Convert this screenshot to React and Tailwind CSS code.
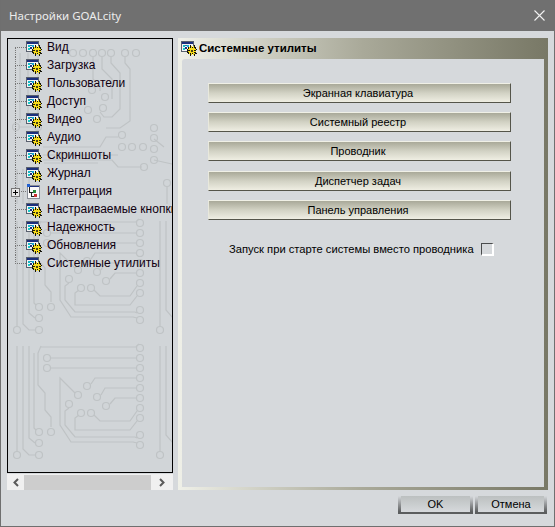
import React from 'react';

const treeItems = [
  'Вид', 'Загрузка', 'Пользователи', 'Доступ', 'Видео', 'Аудио', 'Скриншоты',
  'Журнал', 'Интеграция', 'Настраиваемые кнопки', 'Надежность', 'Обновления', 'Системные утилиты',
];

const toolButtons = [
  { label: 'Экранная клавиатура', gap: 'mt-0' },
  { label: 'Системный реестр', gap: 'mt-[9px]' },
  { label: 'Проводник', gap: 'mt-[9px]' },
  { label: 'Диспетчер задач', gap: 'mt-[10px]' },
  { label: 'Панель управления', gap: 'mt-[9px]' },
];

// small window with a yellow gear, the settings icon of the tree
const GearIcon = () => (
  <svg width="16" height="15" viewBox="0 0 16 15" shapeRendering="crispEdges" className="shrink-0">
    <rect x="0.5" y="0.5" width="12" height="10" fill="#f4f4f4" stroke="#59606e" />
    <rect x="1" y="1" width="11" height="2" fill="#1c2f7c" />
    <rect x="2" y="4" width="2" height="2" fill="#14b8c8" />
    <rect x="4" y="4" width="2" height="1" fill="#1c7c9c" />
    <rect x="6" y="4" width="2" height="2" fill="#18a8d8" />
    <rect x="2" y="7" width="2" height="2" fill="#18c8c8" />
    <rect x="4" y="6" width="2" height="2" fill="#1c2f7c" />
    <path d="M7 6h2V4h1v2h3V4h1v2h1v2h1v1h-1v3h1v1h-2v2h-1v-2h-3v2H9v-2H7v-1H6V8h1z" fill="#16160c" />
    <path d="M8 6h1v1h1V5h1v2h1V5h1v2h1v1h1v1h-2v1h2v1h-2v1h1v1h-1v1h-1v-2h-1v2h-1v-2H9v1H8v-2H7v-1h2V9H7V8h1z" fill="#f7dc18" />
    <rect x="10" y="9" width="2" height="2" fill="#4a4210" />
  </svg>
);

// page with a small node tree, used only for Интеграция
const TreeIcon = () => (
  <svg width="16" height="16" viewBox="0 0 16 16" shapeRendering="crispEdges" className="shrink-0">
    <rect x="1.5" y="1.5" width="12" height="13" fill="#fafafa" stroke="#8a8f98" />
    <rect x="2" y="2" width="11" height="1" fill="#1c2f7c" />
    <path d="M3 3v5h5M5 8v4h4" stroke="#222" fill="none" />
    <rect x="1" y="0" width="3" height="3" fill="#2060d0" />
    <rect x="7" y="6" width="3" height="3" fill="#2a8a3a" />
    <rect x="8" y="10" width="3" height="3" fill="#c83030" />
  </svg>
);

// one block of the printed-circuit wallpaper
const CircuitBlock = ({ y }) => (
  <g transform={`translate(0 ${y})`}>
    <path d="M9 11V116M15 11V114L21 120H27M21 11V103L27 108M26 18V93L28 95M33 11L30 18V50L37 58V75L43 82V92M33 12H128L131 9M42 23H128M42 33H128M83 49L87 43H128M93 60L97 53H128M102 69L107 63H128M67 58L52 43V90L63 107H125L129 108M61 73L57 76V90L67 102H127L129 103M71 80L67 83V95H122L129 86M86 80L92 86H122L129 76" />
    {[[9, 120], [31, 120], [31, 108], [31, 97], [43, 97], [39, 23], [39, 33], [79, 51], [89, 62], [98, 71], [70, 60], [61, 69], [73, 78], [83, 78], [132, 13], [132, 23], [132, 33], [132, 43], [132, 53], [132, 63], [132, 73], [132, 83], [132, 100], [132, 110], [152, 120]].map(([cx, cy]) => (
      <circle key={`${cx}-${cy}`} cx={cx} cy={cy} r="3.5" fill="#d1d5d8" />
    ))}
    <path d="M152 11V116M158 11V100L165 108" />
  </g>
);

const CircuitBackground = () => (
  <svg className="absolute inset-0" width="164" height="433" fill="none" stroke="#bfc3c5" strokeWidth="1.2">
    {/* top block is a turned version of the lower ones */}
    <g>
      {[[65, 14], [75, 14], [85, 14], [94, 14], [103, 14], [117, 14], [128, 14], [97, 58], [95, 69], [80, 71], [89, 80], [84, 51], [114, 96], [114, 108], [124, 108], [135, 108], [146, 89], [146, 99], [146, 110], [146, 121], [136, 128], [159, 144], [8, 88], [30, 88]].map(([cx, cy]) => (
        <circle key={`${cx}-${cy}`} cx={cx} cy={cy} r="3.5" fill="#d1d5d8" />
      ))}
      <path d="M103 18V24L112 34V70L104 78H96L92 73M117 18V24L122 30V82L112 89H98M94 18V30L104 40V60M85 18V40L92 47V52M10 88H30M35 108H92L98 98H110M35 116H110M35 121H104L110 128H134M30 100V14M20 14V84M12 14V84M146 100L156 108M146 121L164 125M159 148V165M36 124H90" />
      <path d="M9 130V165M15 130V165M21 130V165" />
    </g>
    <CircuitBlock y={171} />
    <CircuitBlock y={296} />
  </svg>
);

const TreeRow = ({ label, index, last }) => {
  const isIntegration = label === 'Интеграция';
  return (
    <div className="flex h-[18px] items-center whitespace-nowrap">
      <div className="relative ml-[7px] flex h-[18px] w-[11px] shrink-0 flex-col">
        <div className={`h-[9px] border-b border-dotted border-[#777] ${index === 0 ? '' : 'border-l'}`} />
        <div className={`h-[9px] border-dotted border-[#777] ${last ? '' : 'border-l'}`} />
        {isIntegration && (
          <div className="absolute left-[-4px] top-[5px] flex h-[9px] w-[9px] items-center justify-center border border-[#777] bg-[#e8e8e8]">
            <svg width="7" height="7" viewBox="0 0 7 7" shapeRendering="crispEdges">
              <path d="M1 3.5H6M3.5 1V6" stroke="#000" />
            </svg>
          </div>
        )}
      </div>
      <div className="flex w-[21px] shrink-0 items-center">
        {isIntegration ? <TreeIcon /> : <GearIcon />}
      </div>
      <span className="pb-[2px] text-[12px] leading-[16px] text-[#100010]">{label}</span>
    </div>
  );
};

const ToolButton = ({ label, gap }) => (
  <button className={`${gap} block h-[20px] w-[303px] border-t border-l border-t-[#f0f0e6] border-l-[#e8e8dc] border-b border-r border-b-[#55554a] border-r-[#55554a] bg-linear-to-b from-[#a9a999] via-[#d2d2c4] to-[#efeee3] pr-[3px] text-center text-[11px] leading-[18px] text-black`}>
    {label}
  </button>
);

const FooterButton = ({ label, width }) => (
  <button className={`${width} flex h-[18px] border-b-2 border-b-[#5b5d5e] bg-linear-to-b from-[#bcc0c0] to-[#d6d9dc] text-black`}>
    <span className="h-full w-[3px] bg-linear-to-b from-[#d6d9dc] to-[#5b5d5e]" />
    <span className="flex-1 text-center text-[11px] leading-[16px]">{label}</span>
    <span className="h-full w-[3px] bg-linear-to-b from-[#d6d9dc] to-[#5b5d5e]" />
  </button>
);

const ChevronLeft = () => (
  <svg width="8" height="9" viewBox="0 0 8 9"><path d="M6 1L2.5 4.5L6 8" fill="none" stroke="#5a5a5a" strokeWidth="2" /></svg>
);

const ChevronRight = () => (
  <svg width="8" height="9" viewBox="0 0 8 9"><path d="M2 1L5.5 4.5L2 8" fill="none" stroke="#5a5a5a" strokeWidth="2" /></svg>
);

export default function App() {
  return (
    <div className="flex h-[527px] w-[555px] flex-col border border-t-0 border-[#6f6f6f] bg-[#d6d9dc] font-['Liberation_Sans',sans-serif]">
      {/* title bar */}
      <div className="flex h-[31px] shrink-0 items-center justify-between bg-[#707070] pl-[8px] pr-[9px]">
        <span className="font-['Noto_Sans',sans-serif] text-[11.5px] text-[#ececec]">Настройки GOALcity</span>
        <svg width="11" height="11" viewBox="0 0 11 11"><path d="M0.5 0.5L10.5 10.5M10.5 0.5L0.5 10.5" stroke="#f2f2f2" strokeWidth="1.1" /></svg>
      </div>

      <div className="flex flex-1 pl-[6px] pt-[7px]">
        {/* left tree */}
        <div className="flex w-[166px] shrink-0 flex-col">
          <div className="relative h-[435px] overflow-hidden border border-black bg-[#d1d5d8]">
            <CircuitBackground />
            <div className="relative">
              {treeItems.map((item, i) => (
                <TreeRow key={item} label={item} index={i} last={i === treeItems.length - 1} />
              ))}
            </div>
          </div>
          <div className="mt-[1px] flex h-[16px] items-center bg-[#f0f0f0]">
            <div className="flex w-[17px] justify-center"><ChevronLeft /></div>
            <div className="h-[15px] w-[127px] bg-[#cdcdcd]" />
            <div className="flex w-[22px] justify-center"><ChevronRight /></div>
          </div>
        </div>

        {/* right panel */}
        <div className="ml-[5px] flex h-[452px] w-[370px] flex-col bg-linear-to-r from-[#eff0e8] via-[#a9a999] to-[#787866] px-[4px] pb-[3px]">
          <div className="-ml-[1px] flex h-[21px] shrink-0 items-center gap-[2px]">
            <GearIcon />
            <span className="text-[11.5px] font-bold text-black">Системные утилиты</span>
          </div>
          <div className="flex flex-1 flex-col items-start rounded-tl-[3px] bg-[#d6d9dc] pl-[26px] pt-[24px]">
            {toolButtons.map((b) => (
              <ToolButton key={b.label} label={b.label} gap={b.gap} />
            ))}
            <div className="ml-[21px] mt-[23px] flex h-[13px] items-center">
              <span className="text-[11.2px] text-black">Запуск при старте системы вместо проводника</span>
              <div className="ml-[7px] h-[13px] w-[13px] border-t border-l border-b-2 border-r-2 border-t-[#4a4c4d] border-l-[#4a4c4d] border-b-white border-r-white bg-[#d6d9dc]" />
            </div>
          </div>
        </div>
      </div>

      {/* dialog buttons */}
      <div className="flex h-[36px] shrink-0 justify-end gap-[2px] pr-[7px] pt-[6px]">
        <FooterButton label="OK" width="w-[75px]" />
        <FooterButton label="Отмена" width="w-[72px]" />
      </div>
    </div>
  );
}
